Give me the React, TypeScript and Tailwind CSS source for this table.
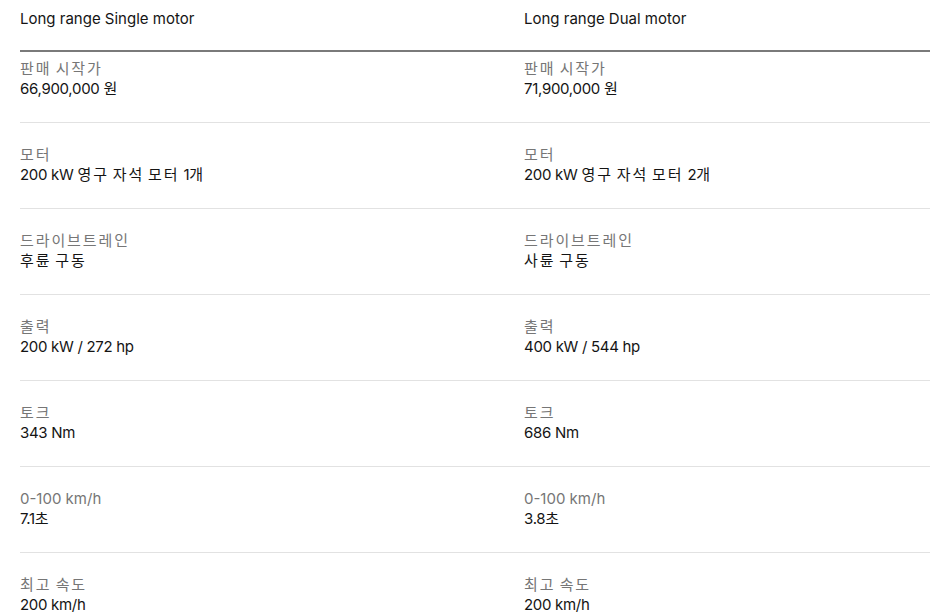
const models = ["Long range Single motor", "Long range Dual motor"];

const specs: { label: string; values: [string, string] }[] = [
  { label: "판매 시작가", values: ["66,900,000 원", "71,900,000 원"] },
  { label: "모터", values: ["200 kW 영구 자석 모터 1개", "200 kW 영구 자석 모터 2개"] },
  { label: "드라이브트레인", values: ["후륜 구동", "사륜 구동"] },
  { label: "출력", values: ["200 kW / 272 hp", "400 kW / 544 hp"] },
  { label: "토크", values: ["343 Nm", "686 Nm"] },
  { label: "0-100 km/h", values: ["7.1초", "3.8초"] },
  { label: "최고 속도", values: ["200 km/h", "200 km/h"] },
];

// hangul glyphs in the reference are wider than Noto's, so space them out a bit
function Mixed({ text }: { text: string }) {
  const parts = text.split(/([\uAC00-\uD7A3]+)/);
  return (
    <>
      {parts.map((p, i) =>
        /[\uAC00-\uD7A3]/.test(p) ? (
          <span key={i} className="tracking-[1.9px]">
            {p}
          </span>
        ) : (
          <span key={i}>{p}</span>
        )
      )}
    </>
  );
}

function SpecCell({ label, value }: { label: string; value: string }) {
  return (
    <div className="flex flex-col">
      <span className="text-[15px] leading-5 text-[#767676]">
        <Mixed text={label} />
      </span>
      <span className="text-[15px] leading-5 tracking-[-0.02em] text-[#141414]">
        <Mixed text={value} />
      </span>
    </div>
  );
}

export default function App() {
  return (
    <div
      className="min-h-screen bg-white"
      style={{ fontFamily: 'Inter, "Noto Sans CJK KR", sans-serif' }}
    >
      <div className="ml-5 w-[910px]">
        <div className="grid grid-cols-[504px_1fr] border-b-2 border-[#7a7a7a] pt-[9px] pb-[21px]">
          {models.map((m) => (
            <h3 key={m} className="text-[15px] leading-5 text-[#141414]">
              {m}
            </h3>
          ))}
        </div>
        {specs.map((s, i) => (
          <div
            key={s.label}
            className={
              i === 0
                ? "grid grid-cols-[504px_1fr] pt-[7px] pb-[23px]"
                : "grid grid-cols-[504px_1fr] border-t border-[#e2e2e2] pt-[22px] pb-[23px]"
            }
          >
            <SpecCell label={s.label} value={s.values[0]} />
            <SpecCell label={s.label} value={s.values[1]} />
          </div>
        ))}
      </div>
    </div>
  );
}
